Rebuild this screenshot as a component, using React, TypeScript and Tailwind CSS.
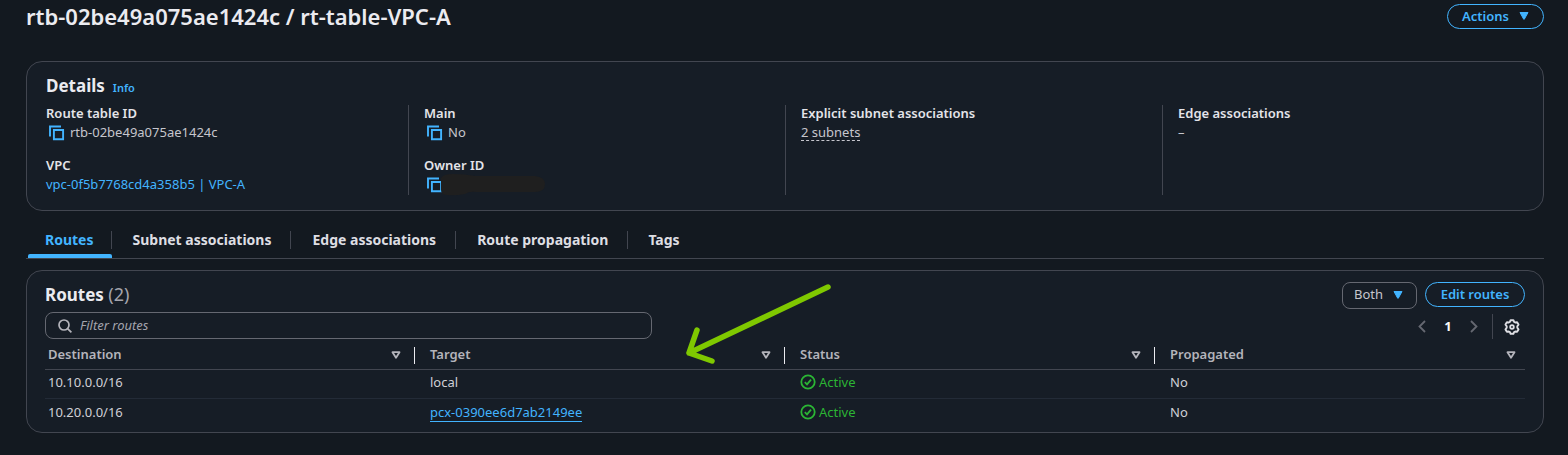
import React from "react";

function CaretDown({ className = "" }: { className?: string }) {
  return (
    <svg viewBox="0 0 10 8" className={`h-2 w-2.5 fill-[#42b4ff] ${className}`} aria-hidden="true">
      <path d="M1 .5h8L5.3 7.2q-.3.5-.6 0z" stroke="#42b4ff" strokeLinejoin="round" />
    </svg>
  );
}

function SortIcon() {
  return (
    <svg viewBox="0 0 10 8" className="h-2 w-2.5 fill-none stroke-[#b4b4bb]" aria-hidden="true">
      <path d="M1.5 1.2h7L5 6.8z" strokeWidth="1.8" strokeLinejoin="round" />
    </svg>
  );
}

function CopyIcon() {
  return (
    <svg viewBox="0 0 16 16" className="size-4 fill-none stroke-[#42b4ff]" aria-hidden="true">
      <path d="M1 11.5V1.5H12" strokeWidth="1.9" />
      <path d="M4.9 5h9.2v9.2H4.9z" strokeWidth="1.9" />
    </svg>
  );
}

function CheckIcon() {
  return (
    <svg viewBox="0 0 16 16" className="size-4 fill-none stroke-[#2bb534]" aria-hidden="true">
      <circle cx="8" cy="8" r="6.7" strokeWidth="1.8" />
      <path d="M4.8 8.2l2.2 2.2 4-4.8" strokeWidth="1.8" />
    </svg>
  );
}

function GearIcon() {
  return (
    <svg viewBox="0 0 16 16" className="size-4 fill-none stroke-[#dedee3]" aria-hidden="true">
      <path
        d="M6.6 1.2h2.8l.7 1.7 1.1.6 1.9-.3 1.4 2.4-1.2 1.6v1.6l1.2 1.6-1.4 2.4-1.9-.3-1.1.6-.7 1.7H6.6l-.7-1.7-1.1-.6-1.9.3-1.4-2.4 1.2-1.6V7.2L1.5 5.6l1.4-2.4 1.9.3 1.1-.6z"
        strokeWidth="1.9"
        strokeLinejoin="round"
      />
      <circle cx="8" cy="8" r="1.8" strokeWidth="1.8" />
    </svg>
  );
}

function CopyButton({ label }: { label: string }) {
  return (
    <button type="button" aria-label={label} className="ml-[3px] flex">
      <CopyIcon />
    </button>
  );
}

function Field({ label, children }: { label: string; children: React.ReactNode }) {
  return (
    <div>
      <dt className="h-[19px] font-semibold leading-[17px] text-[#e4e4e9]">{label}</dt>
      <dd className="flex h-[17px] items-center leading-[17px]">{children}</dd>
    </div>
  );
}

const tabs = ["Routes", "Subnet associations", "Edge associations", "Route propagation", "Tags"];

const columns = ["Destination", "Target", "Status", "Propagated"];

const routes = [
  { destination: "10.10.0.0/16", target: "local", link: false, status: "Active", propagated: "No" },
  { destination: "10.20.0.0/16", target: "pcx-0390ee6d7ab2149ee", link: true, status: "Active", propagated: "No" },
];

function Details() {
  return (
    <section className="mt-8 rounded-2xl border border-[#424650] bg-[#161d26] pt-[13px] pr-[3px] pb-[15px] pl-[5px]">
      <div className="flex items-baseline gap-2 px-[14px]">
        <h2 className="text-[17px] font-bold leading-[22px] text-[#ebebf0]">Details</h2>
        <a href="#info" className="text-[11px] font-semibold text-[#42b4ff]">
          Info
        </a>
      </div>
      <div className="mt-2 grid grid-cols-4 divide-x divide-[#424650]">
        <dl className="flex h-[90px] flex-col gap-4 px-[14px]">
          <Field label="Route table ID">
            <CopyButton label="Copy route table ID" />
            <span className="ml-[5px]">rtb-02be49a075ae1424c</span>
          </Field>
          <Field label="VPC">
            <a href="#vpc" className="text-[#42b4ff]">
              vpc-0f5b7768cd4a358b5 | VPC-A
            </a>
          </Field>
        </dl>
        <dl className="flex h-[90px] flex-col gap-4 px-[15px]">
          <Field label="Main">
            <CopyButton label="Copy main" />
            <span className="ml-[5px]">No</span>
          </Field>
          <Field label="Owner ID">
            <CopyButton label="Copy owner ID" />
            <svg viewBox="0 0 104 22" className="-ml-0.5 h-[22px] w-[104px] fill-[#1f1f1f]" aria-hidden="true">
              <path d="M0 4Q2 0 12 0Q24 0 34 2H94Q104 3 104 10Q104 18 94 18H36Q28 17 24 20Q14 22 6 21Q0 21 0 16z" />
            </svg>
          </Field>
        </dl>
        <dl className="h-[90px] px-[15px]">
          <Field label="Explicit subnet associations">
            <button type="button" className="border-b border-dashed border-[#c6c6cd] leading-4">
              2 subnets
            </button>
          </Field>
        </dl>
        <dl className="h-[90px] px-[15px]">
          <Field label="Edge associations">–</Field>
        </dl>
      </div>
    </section>
  );
}

function Tabs() {
  return (
    <div role="tablist" className="mt-4 flex h-8 border-b border-[#424650] pl-0.5">
      {tabs.map((tab, i) => (
        <button
          key={tab}
          type="button"
          role="tab"
          aria-selected={i === 0}
          className={
            i === 0
              ? "flex flex-col text-sm font-bold text-[#42b4ff]"
              : "flex flex-col text-sm font-bold text-[#dedee3]"
          }
        >
          <span
            className={
              i === tabs.length - 1
                ? "mt-1 h-[18px] px-5 leading-[18px]"
                : i === 0
                  ? "mt-1 h-[18px] border-r border-[#424650] px-[17px] leading-[18px]"
                  : "mt-1 h-[18px] border-r border-[#424650] pr-[19px] pl-[21px] leading-[18px]"
            }
          >
            {tab}
          </span>
          <span className={i === 0 ? "mt-[5px] h-1 w-full rounded-t-xs bg-[#42b4ff]" : "hidden"} />
        </button>
      ))}
    </div>
  );
}

function RoutesPanel() {
  return (
    <section className="relative mt-[11px] rounded-2xl border border-[#424650] bg-[#161d26] px-[18px] pt-[11px] pb-[3px]">
      <div className="flex h-[30px] items-start justify-between">
        <h2 className="text-[17px] font-bold leading-[25px] text-[#ebebf0]">
          Routes <span className="text-lg font-normal leading-[25px] text-[#a4a4ad]">(2)</span>
        </h2>
        <div className="flex items-start gap-2">
          <div className="relative">
            <select
              aria-label="Route type"
              defaultValue="Both"
              className="h-[27px] w-[75px] appearance-none rounded-lg border border-[#656871] pb-[3px] pl-[11px] text-[#c6c6cd]"
            >
              <option>Both</option>
            </select>
            <CaretDown className="pointer-events-none absolute top-[9px] right-[14px]" />
          </div>
          <button
            type="button"
            className="h-[25px] w-[100px] rounded-full border border-[#42b4ff] pb-0.5 font-semibold text-[#42b4ff]"
          >
            Edit routes
          </button>
        </div>
      </div>
      <div className="flex items-end justify-between">
        <label className="flex h-[27px] w-[41%] items-center gap-2 rounded-lg border border-[#656871] pl-3">
          <svg viewBox="0 0 14 14" className="size-3.5 fill-none stroke-[#b4b4bb]" aria-hidden="true">
            <circle cx="6" cy="6" r="5" strokeWidth="1.7" />
            <path d="M9.6 9.6L13.4 13.4" strokeWidth="1.7" />
          </svg>
          <input
            type="text"
            aria-label="Filter routes"
            placeholder="Filter routes"
            className="min-w-0 flex-1 bg-transparent pb-px outline-none placeholder:text-[#a4a4ad] placeholder:italic"
          />
        </label>
        <div className="flex h-[25px] items-center">
          <button type="button" aria-label="Previous page">
            <svg viewBox="0 0 8 13" className="h-[13px] w-2 fill-none stroke-[#656871]">
              <path d="M7 1L1.5 6.5 7 12" strokeWidth="1.8" />
            </svg>
          </button>
          <button type="button" className="w-11 pb-px font-bold text-[#f9f9fa]">
            1
          </button>
          <button type="button" aria-label="Next page">
            <svg viewBox="0 0 8 13" className="h-[13px] w-2 fill-none stroke-[#656871]">
              <path d="M1 1l5.5 5.5L1 12" strokeWidth="1.8" />
            </svg>
          </button>
          <span className="ml-[14px] h-[25px] w-px bg-[#424650]" />
          <button type="button" aria-label="Preferences" className="mr-[5px] ml-[11px]">
            <GearIcon />
          </button>
        </div>
      </div>
      <table className="mt-px w-full table-fixed border-collapse text-left">
        <thead>
          <tr className="h-[29px] border-b border-[#424650]">
            {columns.map((column, i) => (
              <th key={column} scope="col" className="p-0 pt-0.5 font-semibold text-[#b4b4bb]">
                <div
                  className={
                    i === columns.length - 1
                      ? "flex h-[17px] items-center justify-between pr-[9px] pl-[15px] leading-[17px]"
                      : i === 0
                        ? "flex h-[17px] items-center justify-between border-r border-[#ebebf0] pr-[13px] pl-[3px] leading-[17px]"
                        : "flex h-[17px] items-center justify-between border-r border-[#ebebf0] pr-[13px] pl-[15px] leading-[17px]"
                  }
                >
                  <span className="pb-0.5">{column}</span>
                  <button type="button" aria-label={`Sort by ${column}`}>
                    <SortIcon />
                  </button>
                </div>
              </th>
            ))}
          </tr>
        </thead>
        <tbody className="text-[#d0d0d6]">
          {routes.map((route) => (
            <tr key={route.destination} className="h-[29px] border-b border-[#232b37] last:h-[31px] last:border-b-0">
              <td className="p-0 pb-[3px] pl-[3px]">{route.destination}</td>
              <td className="p-0 pb-[3px] pl-[15px]">
                {route.link ? (
                  <a href="#peering" className="border-b border-[#42b4ff] text-[#42b4ff]">
                    {route.target}
                  </a>
                ) : (
                  route.target
                )}
              </td>
              <td className="p-0 pb-[3px] pl-[15px]">
                <span className="flex items-center gap-[3px] text-[#2bb534]">
                  <CheckIcon />
                  {route.status}
                </span>
              </td>
              <td className="p-0 pb-[3px] pl-[15px]">{route.propagated}</td>
            </tr>
          ))}
        </tbody>
      </table>
      <svg
        viewBox="0 0 146 80"
        className="pointer-events-none absolute top-[13px] left-[43.5%] h-20 w-[146px] fill-none stroke-[#7fc800]"
        aria-hidden="true"
      >
        <path d="M142 3L3 69M11 46L3 69L26 77" strokeWidth="5.5" strokeLinecap="round" strokeLinejoin="round" />
      </svg>
    </section>
  );
}

export default function App() {
  return (
    <main className="min-h-screen bg-[#131920] pr-6 pl-[26px] font-['Noto_Sans',sans-serif] text-[13px] leading-[18px] text-[#c6c6cd]">
      <header className="flex items-start justify-between pt-1">
        <h1 className="text-[22px] font-semibold leading-[25px] text-[#ebebf0]">
          rtb-02be49a075ae1424c / rt-table-VPC-A
        </h1>
        <button
          type="button"
          className="flex h-[25px] items-center gap-2.5 rounded-full border border-[#42b4ff] px-[14px] pb-0.5 font-semibold text-[#42b4ff]"
        >
          Actions
          <CaretDown />
        </button>
      </header>
      <Details />
      <Tabs />
      <RoutesPanel />
    </main>
  );
}
